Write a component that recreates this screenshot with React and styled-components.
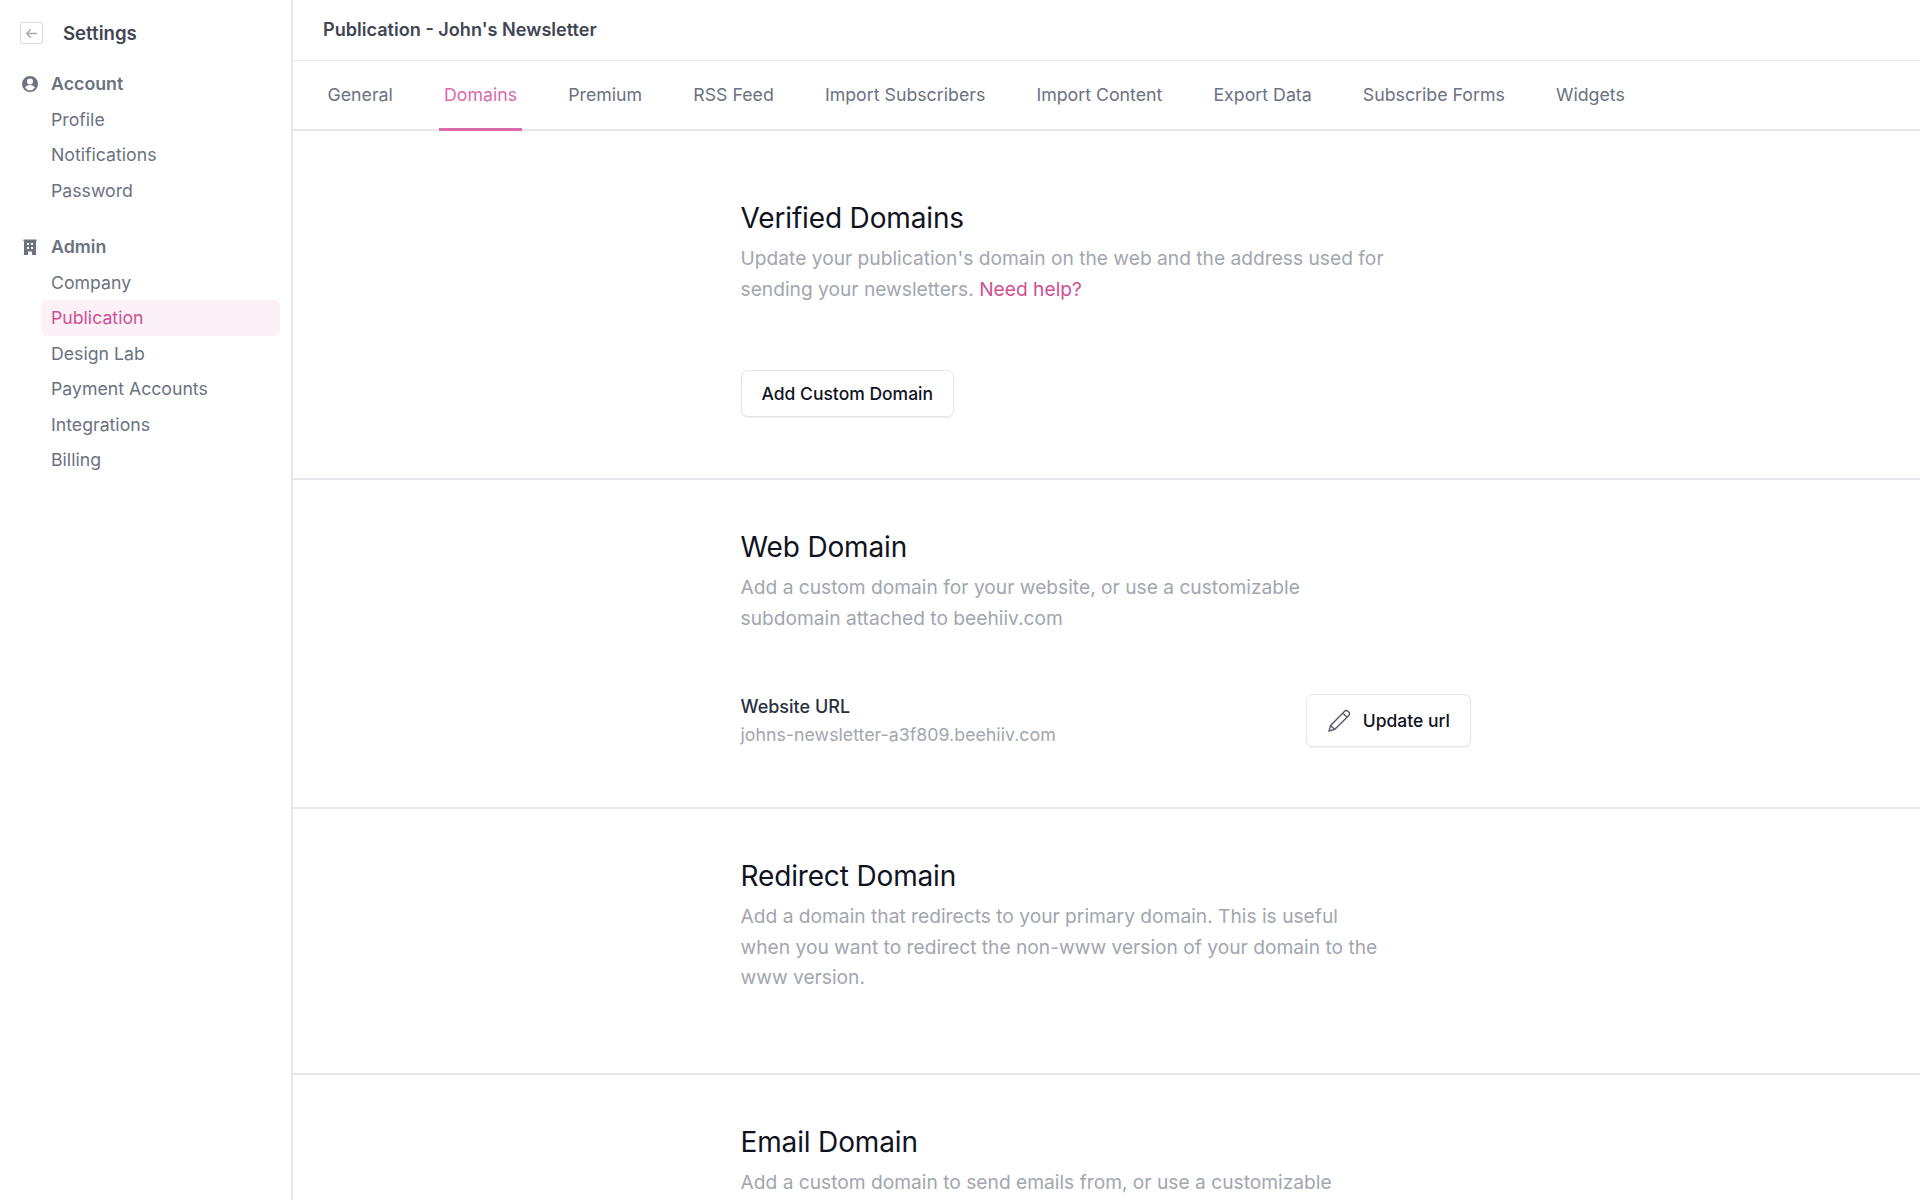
import styled, { createGlobalStyle } from 'styled-components';

const colors = {
  border: '#e5e7eb',
  gray400: '#a2a6af',
  gray500: '#6b7280',
  gray700: '#414653',
  gray800: '#2b3040',
  gray900: '#10131f',
  pink: '#db6aa8',
  pinkDark: '#cf4f94',
  pinkBg: '#fcf1f7'
};

const GlobalStyle = createGlobalStyle`
  html, body {
    margin: 0;
    padding: 0;
    background: #fff;
    font-family: Inter, 'Liberation Sans', sans-serif;
  }
`;

const Page = styled.div`
  display: flex;
  height: 1200px;
  overflow: hidden;
`;

const Sidebar = styled.aside`
  flex: 0 0 293px;
  box-sizing: border-box;
  border-right: 2px solid ${colors.border};
  padding: 22px 11px 0 20px;
`;

const SidebarHeader = styled.div`
  display: flex;
  align-items: center;
  gap: 20px;
  height: 22px;
  margin-bottom: 22px;
`;

const BackButton = styled.div`
  display: flex;
  align-items: center;
  justify-content: center;
  box-sizing: border-box;
  width: 23px;
  height: 22px;
  border: 1px solid #d9dbe0;
  border-radius: 2px;
  color: ${colors.gray400};
`;

const SidebarTitle = styled.div`
  font-size: 18.6px;
  font-weight: 600;
  color: ${colors.gray700};
`;

const NavGroup = styled.div`
  margin-bottom: 21px;
`;

const NavHeading = styled.div`
  display: flex;
  align-items: center;
  gap: 11px;
  height: 35.5px;
  font-size: 17.8px;
  font-weight: 600;
  color: ${colors.gray500};
`;

const NavItem = styled.div`
  display: flex;
  align-items: center;
  height: 35.5px;
  margin-left: 21px;
  padding-left: 10px;
  border-radius: 6px;
  font-size: 17.7px;
  color: ${(p) => (p.$active ? colors.pinkDark : colors.gray500)};
  background: ${(p) => (p.$active ? colors.pinkBg : 'transparent')};
`;

const Main = styled.main`
  flex: 1;
  min-width: 0;
`;

const TopBar = styled.div`
  display: flex;
  align-items: center;
  box-sizing: border-box;
  height: 61px;
  padding: 0 0 2px 30px;
  border-bottom: 1px solid ${colors.border};
  font-size: 18.1px;
  font-weight: 600;
  color: ${colors.gray700};
`;

const Tabs = styled.nav`
  display: flex;
  gap: 41.1px;
  box-sizing: border-box;
  height: 70px;
  padding-left: 29.5px;
  border-bottom: 2px solid ${colors.border};
`;

const Tab = styled.div`
  display: flex;
  align-items: center;
  box-sizing: border-box;
  height: 70px;
  padding: 0 5px 1px;
  font-size: 17.75px;
  color: ${(p) => (p.$active ? colors.pink : colors.gray500)};
  border-bottom: 3px solid ${(p) => (p.$active ? colors.pink : 'transparent')};
`;

const Section = styled.section`
  box-sizing: border-box;
  height: ${(p) => p.$height}px;
  padding: ${(p) => (p.$first ? 67 : 47)}px 0 0 447.5px;
  border-bottom: ${(p) => (p.$last ? 'none' : `2px solid ${colors.border}`)};
`;

const Content = styled.div`
  width: 730.5px;
`;

const Heading = styled.h2`
  margin: 0 0 5px;
  font-size: 28px;
  line-height: 40px;
  letter-spacing: -0.15px;
  font-weight: 400;
  color: ${colors.gray900};
`;

const Description = styled.p`
  margin: 0;
  max-width: 648px;
  font-size: 19.2px;
  line-height: 30.6px;
  color: ${colors.gray400};
`;

const HelpLink = styled.a`
  color: ${colors.pinkDark};
`;

const Button = styled.div`
  display: inline-flex;
  align-items: center;
  gap: 12px;
  box-sizing: border-box;
  padding: ${(p) => (p.$tall ? '0 20px 0 21px' : '0 20px')};
  height: ${(p) => (p.$tall ? 53 : 47)}px;
  border: 1px solid ${colors.border};
  border-radius: 7px;
  box-shadow: 0 1px 2px rgba(0, 0, 0, 0.07);
  font-size: 17.5px;
  font-weight: 500;
  color: ${colors.gray900};
  background: #fff;
`;

const ButtonRow = styled.div`
  margin-top: 65.5px;
`;

const UrlRow = styled.div`
  display: flex;
  justify-content: space-between;
  align-items: center;
  margin-top: 59.5px;
`;

const UrlLabel = styled.div`
  font-size: 18px;
  font-weight: 500;
  line-height: 28px;
  color: ${colors.gray800};
`;

const UrlValue = styled.div`
  font-size: 17.8px;
  line-height: 28px;
  color: ${colors.gray400};
`;

const BackIcon = () => (
  <svg width="13" height="13" viewBox="0 0 24 24" fill="none" stroke="currentColor" strokeWidth="2.4" strokeLinecap="round" strokeLinejoin="round">
    <path d="M10 5l-7 7 7 7M3 12h18" />
  </svg>
);

const AccountIcon = () => (
  <svg width="20" height="20" viewBox="0 0 20 20" fill={colors.gray500}>
    <path fillRule="evenodd" clipRule="evenodd" d="M18 10a8 8 0 1 1-16 0 8 8 0 0 1 16 0Zm-5-2.5a3 3 0 1 1-6 0 3 3 0 0 1 6 0ZM10 11c-2.1 0-3.9 1-5 2.6A6.4 6.4 0 0 0 10 16.5a6.4 6.4 0 0 0 5-2.9C13.9 12 12.1 11 10 11Z" />
  </svg>
);

const BuildingIcon = () => (
  <svg width="20" height="20" viewBox="0 0 20 20" fill={colors.gray500}>
    <path fillRule="evenodd" clipRule="evenodd" d="M4 2.5h12a.5.5 0 0 1 0 1.6V17.5h.5V18H12v-3.5H8V18H3.5v-.5H4V4.1a.5.5 0 0 1 0-1.6ZM7 6v2h2V6H7Zm4 0v2h2V6h-2ZM7 10v2h2v-2H7Zm4 0v2h2v-2h-2Z" />
  </svg>
);

const PencilIcon = () => (
  <svg width="23" height="23" viewBox="0 0 23 23" fill="none" stroke="#555a66" strokeWidth="1.4" strokeLinecap="round" strokeLinejoin="round">
    <path d="M1 22l1.6-5.6L16.6 2.2a2.3 2.3 0 0 1 3.3 0l.9.9a2.3 2.3 0 0 1 0 3.3L6.6 20.4 1 22ZM14.8 4l4.2 4.2M2.6 16.4l4 4" />
  </svg>
);

const tabs = ['General', 'Domains', 'Premium', 'RSS Feed', 'Import Subscribers', 'Import Content', 'Export Data', 'Subscribe Forms', 'Widgets'];

const navGroups = [
  { title: 'Account', icon: <AccountIcon />, items: ['Profile', 'Notifications', 'Password'] },
  { title: 'Admin', icon: <BuildingIcon />, items: ['Company', 'Publication', 'Design Lab', 'Payment Accounts', 'Integrations', 'Billing'] }
];

export default function App() {
  return (
    <Page>
      <GlobalStyle />
      <Sidebar>
        <SidebarHeader>
          <BackButton>
            <BackIcon />
          </BackButton>
          <SidebarTitle>Settings</SidebarTitle>
        </SidebarHeader>
        {navGroups.map((group) => (
          <NavGroup key={group.title}>
            <NavHeading>
              {group.icon}
              {group.title}
            </NavHeading>
            {group.items.map((item) => (
              <NavItem key={item} $active={item === 'Publication'}>
                {item}
              </NavItem>
            ))}
          </NavGroup>
        ))}
      </Sidebar>
      <Main>
        <TopBar>Publication - John's Newsletter</TopBar>
        <Tabs>
          {tabs.map((tab) => (
            <Tab key={tab} $active={tab === 'Domains'}>
              {tab}
            </Tab>
          ))}
        </Tabs>
        <Section $first $height={349}>
          <Content>
            <Heading>Verified Domains</Heading>
            <Description>
              Update your publication's domain on the web and the address used for sending your newsletters.{' '}
              <HelpLink>Need help?</HelpLink>
            </Description>
            <ButtonRow>
              <Button>Add Custom Domain</Button>
            </ButtonRow>
          </Content>
        </Section>
        <Section $height={329}>
          <Content>
            <Heading>Web Domain</Heading>
            <Description>
              Add a custom domain for your website, or use a customizable subdomain attached to beehiiv.com
            </Description>
            <UrlRow>
              <div>
                <UrlLabel>Website URL</UrlLabel>
                <UrlValue>johns-newsletter-a3f809.beehiiv.com</UrlValue>
              </div>
              <Button $tall>
                <PencilIcon />
                Update url
              </Button>
            </UrlRow>
          </Content>
        </Section>
        <Section $height={266}>
          <Content>
            <Heading>Redirect Domain</Heading>
            <Description>
              Add a domain that redirects to your primary domain. This is useful when you want to redirect the non-www version of your domain to the www version.
            </Description>
          </Content>
        </Section>
        <Section $last $height={200}>
          <Content>
            <Heading>Email Domain</Heading>
            <Description>
              Add a custom domain to send emails from, or use a customizable subdomain attached to beehiiv.com
            </Description>
          </Content>
        </Section>
      </Main>
    </Page>
  );
}
